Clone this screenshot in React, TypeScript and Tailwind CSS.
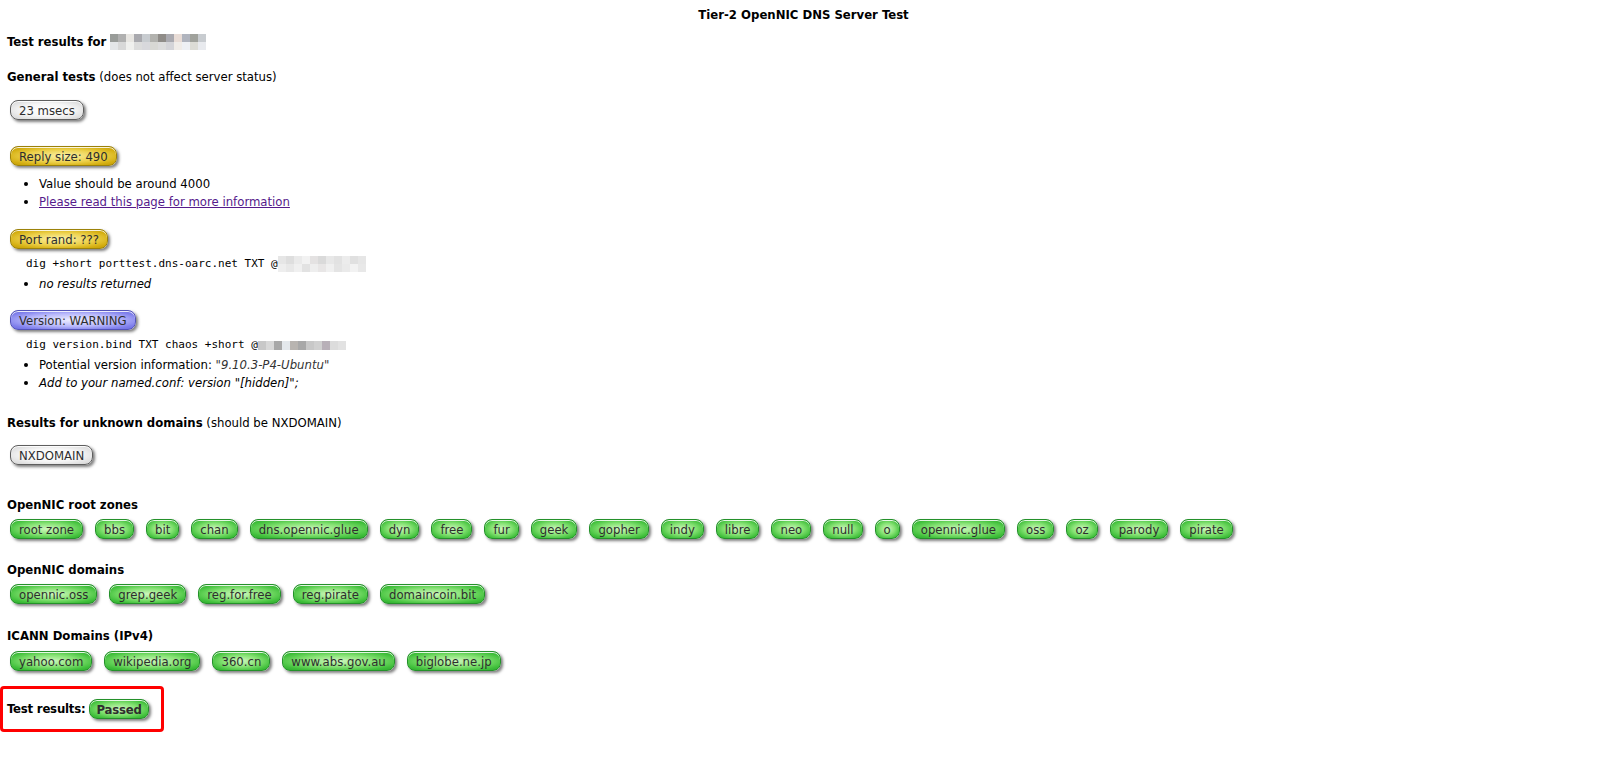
import React from 'react';

type Tone = 'grey' | 'gold' | 'green' | 'blue';

const toneClass: Record<Tone, string> = {
  grey: 'border-[#5e5e5e] bg-[radial-gradient(ellipse_at_center,#ffffff_0%,#f6f6f6_50%,#d2d2d2_100%)]',
  gold: 'border-[#9c820a] bg-[radial-gradient(ellipse_at_center,#fbf1a8_0%,#ecd04a_50%,#d4ae10_80%,#c09a08_100%)]',
  green: 'border-[#24912a] bg-[radial-gradient(ellipse_at_center,#cdf7bd_0%,#86e274_45%,#3fbf3a_80%,#2ea82e_100%)]',
  blue: 'border-[#5252b8] bg-[radial-gradient(ellipse_at_center,#eeeeff_0%,#b8b8fb_50%,#8080ec_80%,#6c6ce0_100%)]',
};

// glossy pill badge used for every test result
const Pill = ({ tone, children, bold }: { tone: Tone; children: React.ReactNode; bold?: boolean }) => (
  <span
    className={`inline-flex h-[20px] shrink-0 items-center rounded-[8px] border text-[13px] leading-none text-[#2e2e2e] shadow-[2px_2px_3px_rgba(0,0,0,0.5),inset_0_1px_0_rgba(255,255,255,0.85)] ${toneClass[tone]} ${bold ? 'px-[6px] font-bold tracking-[-0.2px]' : 'px-[8px]'}`}
  >
    {children}
  </span>
);

// blurred-out ip address
const Mosaic = ({ rows, h }: { rows: string[][]; h: number }) => (
  <span className="inline-flex flex-col align-middle">
    {rows.map((row, i) => (
      <span key={i} className="flex">
        {row.map((c, j) => (
          <span key={j} className="block w-[8px]" style={{ background: c, height: h }} />
        ))}
      </span>
    ))}
  </span>
);

const rootZones = ['root zone', 'bbs', 'bit', 'chan', 'dns.opennic.glue', 'dyn', 'free', 'fur', 'geek', 'gopher', 'indy', 'libre', 'neo', 'null', 'o', 'opennic.glue', 'oss', 'oz', 'parody', 'pirate'];
const domains = ['opennic.oss', 'grep.geek', 'reg.for.free', 'reg.pirate', 'domaincoin.bit'];
const icann = ['yahoo.com', 'wikipedia.org', '360.cn', 'www.abs.gov.au', 'biglobe.ne.jp'];

const PillRow = ({ items }: { items: string[] }) => (
  <div className="ml-[3px] flex gap-[12px]">
    {items.map((d) => (
      <Pill key={d} tone="green">{d}</Pill>
    ))}
  </div>
);

export default function App() {
  return (
    <div className="min-h-[770px] bg-white pl-[7px] pt-[6px] font-['DejaVu_Sans_Condensed','DejaVu_Sans',sans-serif] text-[13px] leading-[18px] text-black font-stretch-condensed">
      <h1 className="text-center font-bold">Tier-2 OpenNIC DNS Server Test</h1>

      <div className="mt-[9px] flex items-center gap-[4px] font-bold">
        <span>Test results for</span>
        <Mosaic
          h={8}
          rows={[
            ['#999c99', '#b0b0b0', '#e8e6e2', '#a9a9ae', '#c8ccd0', '#b2b2ae', '#8f8c88', '#aaaab0', '#e8dcd6', '#b0b4be', '#a0a29c', '#c8ccd0'],
            ['#e4e6e8', '#d8d8d8', '#f0f0ee', '#dcdcdc', '#d8d8dc', '#d8d8d4', '#dcdcdc', '#d4d4d8', '#f0ece8', '#eef0f4', '#dcdcd6', '#e8eaee'],
          ]}
        />
      </div>

      <p className="mt-[17px]">
        <b>General tests</b> (does not affect server status)
      </p>

      <div className="ml-[3px] mt-[14px] flex">
        <Pill tone="grey">23 msecs</Pill>
      </div>

      <div className="ml-[3px] mt-[26px] flex">
        <Pill tone="gold">Reply size: 490</Pill>
      </div>
      <ul className="mt-[9px] list-disc pl-[32px]">
        <li>Value should be around 4000</li>
        <li>
          <a href="#" className="text-[#551a8b] underline">Please read this page for more information</a>
        </li>
      </ul>

      <div className="ml-[3px] mt-[18px] flex">
        <Pill tone="gold">Port rand: ???</Pill>
      </div>
      <div className="ml-[19px] mt-[5px] flex h-[20px] items-center font-['DejaVu_Sans_Mono',monospace] text-[11px] font-stretch-normal">
        <span className="whitespace-pre">dig +short porttest.dns-oarc.net TXT @</span>
        <Mosaic
          h={8}
          rows={[
            ['#e6e6e6', '#dedede', '#eaeaea', '#f2f2f2', '#e4e2e2', '#dadada', '#e8e8e8', '#e2e2e2', '#ececec', '#e0e0e0', '#e6e6e6'],
            ['#eeeeee', '#e8e8e8', '#f0f0f0', '#e2e2e2', '#eeeeee', '#e8e6e6', '#f0f0f0', '#e4e4e4', '#eaeaea', '#f2f2f2', '#e8e8e8'],
          ]}
        />
      </div>
      <ul className="mt-[1px] list-disc pl-[32px]">
        <li className="italic">no results returned</li>
      </ul>

      <div className="ml-[3px] mt-[17px] flex">
        <Pill tone="blue">Version: WARNING</Pill>
      </div>
      <div className="ml-[19px] mt-[6px] flex h-[18px] items-center font-['DejaVu_Sans_Mono',monospace] text-[11px] font-stretch-normal">
        <span className="whitespace-pre">dig version.bind TXT chaos +short @</span>
        <Mosaic
          h={9}
          rows={[['#c8c8c8', '#d8d8d8', '#a8a8a8', '#e4e8ec', '#b8b4b0', '#a8a8a8', '#c8c8c8', '#d0d0d0', '#b8b0b8', '#dcdcdc', '#e2e2e2']]}
        />
      </div>
      <ul className="mt-[2px] list-disc pl-[32px]">
        <li>
          Potential version information: <i className="text-[#333]">"9.10.3-P4-Ubuntu"</i>
        </li>
        <li className="italic">Add to your named.conf: version "[hidden]";</li>
      </ul>

      <p className="mt-[22px]">
        <b>Results for unknown domains</b> (should be NXDOMAIN)
      </p>
      <div className="ml-[3px] mt-[13px] flex">
        <Pill tone="grey">NXDOMAIN</Pill>
      </div>

      <p className="mt-[31px] font-bold">OpenNIC root zones</p>
      <div className="mt-[5px]">
        <PillRow items={rootZones} />
      </div>

      <p className="mt-[22px] font-bold">OpenNIC domains</p>
      <div className="mt-[5px]">
        <PillRow items={domains} />
      </div>

      <p className="mt-[23px] font-bold">ICANN Domains (IPv4)</p>
      <div className="mt-[6px]">
        <PillRow items={icann} />
      </div>

      <div className="-ml-[7px] mt-[15px] flex h-[46px] w-[164px] items-center gap-[4px] rounded-[4px] border-[3px] border-[#ff0000] pl-[4px]">
        <b className="tracking-[-0.2px]">Test results:</b>
        <Pill tone="green" bold>Passed</Pill>
      </div>
    </div>
  );
}
